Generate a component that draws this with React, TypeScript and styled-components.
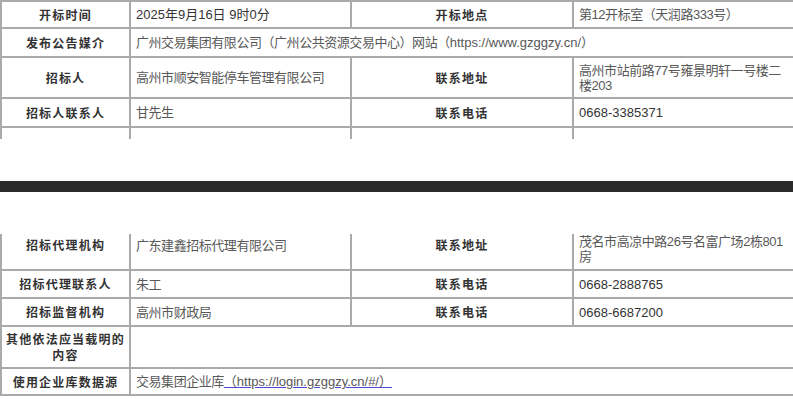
import styled, { createGlobalStyle } from "styled-components";

const GlobalStyle = createGlobalStyle`
  html, body {
    margin: 0;
    padding: 0;
    background: #fff;
  }
  body {
    width: 793px;
    height: 399px;
    overflow: hidden;
    font-family: "Liberation Sans", "Noto Sans CJK SC", sans-serif;
  }
`;

const Page = styled.div`
  display: flex;
  flex-direction: column;
  width: 793px;
`;

const Table = styled.table<{ $open?: "top" | "bottom" }>`
  width: 793px;
  table-layout: fixed;
  border-collapse: collapse;
  border-left: 1px solid #ddd;
  border-right: 2px solid #aaa;
  border-top: ${(p) => (p.$open === "top" ? "none" : "2px solid #aaa")};
  border-bottom: ${(p) => (p.$open === "bottom" ? "none" : "1px solid #ddd")};
`;

const Row = styled.tr<{ $h: number; $open?: "top" | "bottom" }>`
  height: ${(p) => p.$h}px;
  td,
  th {
    ${(p) => (p.$open === "top" ? "border-top: none;" : "")}
    ${(p) => (p.$open === "bottom" ? "border-bottom: none;" : "")}
  }
`;

const Label = styled.th<{ $top?: number }>`
  border: 2px solid #aaa;
  padding: ${(p) => (p.$top !== undefined ? `${p.$top}px 2px 0` : "0 2px")};
  vertical-align: ${(p) => (p.$top !== undefined ? "top" : "middle")};
  text-align: center;
  font-family: "Noto Sans CJK SC", sans-serif;
  font-size: 12px;
  font-weight: 700;
  letter-spacing: 1.2px;
  line-height: 16px;
  color: #333;
`;

const Value = styled.td<{ $top?: number; $tight?: boolean; $dark?: boolean }>`
  border: 2px solid #aaa;
  padding: ${(p) => (p.$top !== undefined ? `${p.$top}px 4px 0 5px` : "0 4px 0 5px")};
  vertical-align: ${(p) => (p.$top !== undefined ? "top" : "middle")};
  text-align: left;
  font-size: 13px;
  line-height: 15px;
  letter-spacing: ${(p) => (p.$tight ? "-0.45px" : "0")};
  color: ${(p) => (p.$dark ? "#333" : "#585858")};
  word-break: break-all;
`;

const Url = styled.span`
  letter-spacing: 0;
`;

const Link = styled.a`
  color: #585858;
  letter-spacing: 0;
  text-decoration: underline;
  text-decoration-color: #5046dc;
`;

const Gap = styled.div`
  height: 42px;
`;

const Divider = styled.div`
  height: 11px;
  background: #2a2a2a;
`;

const Cols = () => (
  <colgroup>
    <col style={{ width: 129 }} />
    <col style={{ width: 221 }} />
    <col style={{ width: 222 }} />
    <col style={{ width: 221 }} />
  </colgroup>
);

export default function App() {
  return (
    <>
      <GlobalStyle />
      <Page>
        <Table $open="bottom">
          <Cols />
          <tbody>
            <Row $h={27}>
              <Label>开标时间</Label>
              <Value $dark>2025年9月16日 9时0分</Value>
              <Label>开标地点</Label>
              <Value $tight>第12开标室（天润路333号）</Value>
            </Row>
            <Row $h={29}>
              <Label>发布公告媒介</Label>
              <Value colSpan={3} $tight>
                广州交易集团有限公司（广州公共资源交易中心）网站（<Url>https://www.gzggzy.cn/</Url>）
              </Value>
            </Row>
            <Row $h={41}>
              <Label>招标人</Label>
              <Value $tight>高州市顺安智能停车管理有限公司</Value>
              <Label>联系地址</Label>
              <Value $tight>高州市站前路77号雍景明轩一号楼二楼203</Value>
            </Row>
            <Row $h={29}>
              <Label>招标人联系人</Label>
              <Value $tight>甘先生</Value>
              <Label>联系电话</Label>
              <Value $dark>0668-3385371</Value>
            </Row>
            <Row $h={12} $open="bottom">
              <Label />
              <Value />
              <Label />
              <Value />
            </Row>
          </tbody>
        </Table>
        <Gap />
        <Divider />
        <Gap />
        <Table $open="top">
          <Cols />
          <tbody>
            <Row $h={36} $open="top">
              <Label $top={3}>招标代理机构</Label>
              <Value $top={4} $tight>广东建鑫招标代理有限公司</Value>
              <Label $top={3}>联系地址</Label>
              <Value $top={0} $tight>茂名市高凉中路26号名富广场2栋801房</Value>
            </Row>
            <Row $h={28}>
              <Label>招标代理联系人</Label>
              <Value $tight>朱工</Value>
              <Label>联系电话</Label>
              <Value $dark>0668-2888765</Value>
            </Row>
            <Row $h={28}>
              <Label>招标监督机构</Label>
              <Value $tight>高州市财政局</Value>
              <Label>联系电话</Label>
              <Value $dark>0668-6687200</Value>
            </Row>
            <Row $h={42}>
              <Label>其他依法应当载明的内容</Label>
              <Value colSpan={3} />
            </Row>
            <Row $h={27}>
              <Label>使用企业库数据源</Label>
              <Value colSpan={3} $tight>
                交易集团企业库
                <Link href="#">（https://login.gzggzy.cn/#/）</Link>
              </Value>
            </Row>
          </tbody>
        </Table>
      </Page>
    </>
  );
}
